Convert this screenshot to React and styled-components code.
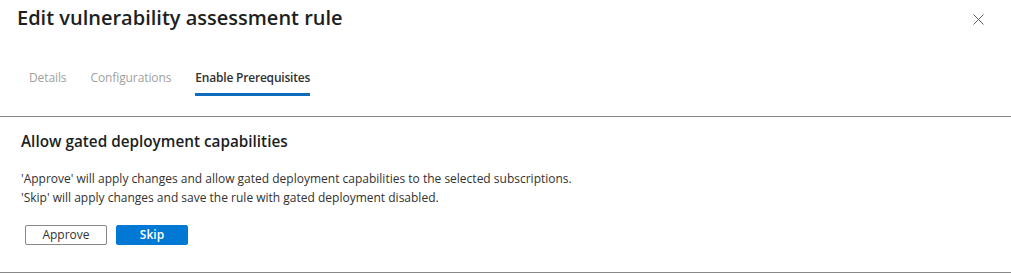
import React from 'react';
import styled, { createGlobalStyle } from 'styled-components';

const GlobalStyle = createGlobalStyle`
  body {
    margin: 0;
    background: #fff;
    font-family: "Open Sans", "Noto Sans", sans-serif;
    color: #323130;
  }
`;

const Panel = styled.div`
  width: 1011px;
  height: 274px;
  overflow: hidden;
  background: #fff;
`;

const Header = styled.div`
  padding: 4px 0 0 17px;
  display: flex;
  flex-direction: column;
`;

const TitleRow = styled.div`
  display: flex;
  align-items: flex-start;
  justify-content: space-between;
`;

const Title = styled.h1`
  margin: 0;
  font-size: 20px;
  line-height: 28px;
  font-weight: 600;
  color: #201f1e;
`;

const CloseButton = styled.button`
  border: 0;
  background: none;
  padding: 0;
  margin: 10px 27px 0 0;
  width: 11px;
  height: 11px;
  display: flex;
  cursor: pointer;
`;

const Tabs = styled.div`
  display: flex;
  margin-top: 36px;
`;

const Tab = styled.div`
  padding: 0 12px;
  font-size: 12px;
  line-height: 20px;
  color: ${({ $active }) => ($active ? '#323130' : '#a19f9d')};
  font-weight: ${({ $active }) => ($active ? 600 : 400)};
  letter-spacing: ${({ $active }) => ($active ? '-0.2px' : '-0.1px')};
`;

const TabLabel = styled.span`
  display: block;
  padding-bottom: 5px;
  border-bottom: 3px solid ${({ $active }) => ($active ? '#0f6cbd' : 'transparent')};
`;

const Divider = styled.hr`
  margin: ${({ $top }) => $top}px 0 0;
  border: 0;
  border-top: 1px solid #8a8886;
`;

const Section = styled.section`
  padding: 14px 21px 0;
  height: 155px;
  box-sizing: border-box;
`;

const Heading = styled.h2`
  margin: 0;
  font-size: 15.3px;
  line-height: 20px;
  font-weight: 600;
  color: #201f1e;
`;

const Text = styled.p`
  margin: 18px 0 0;
  font-size: 12px;
  line-height: 19px;
`;

const Actions = styled.div`
  display: flex;
  gap: 9px;
  margin: 18px 0 0 4px;
`;

const Button = styled.button`
  height: 20px;
  box-sizing: border-box;
  padding: 0;
  width: ${({ $w }) => $w}px;
  font-family: inherit;
  font-size: 12px;
  line-height: 18px;
  border-radius: 2px;
  border: 1px solid ${({ $primary }) => ($primary ? '#0078d4' : '#8a8886')};
  background: ${({ $primary }) => ($primary ? '#0078d4' : '#fff')};
  color: ${({ $primary }) => ($primary ? '#fff' : '#323130')};
  font-weight: ${({ $primary }) => ($primary ? 600 : 400)};
  cursor: pointer;
`;

const tabs = ['Details', 'Configurations', 'Enable Prerequisites'];

export default function App() {
  return (
    <Panel>
      <GlobalStyle />
      <Header>
        <TitleRow>
          <Title>Edit vulnerability assessment rule</Title>
          <CloseButton aria-label="Close">
            <svg width="11" height="11" viewBox="0 0 11 11">
              <path d="M0.5 0.5 L10.5 10.5 M10.5 0.5 L0.5 10.5" stroke="#605e5c" strokeWidth="1" />
            </svg>
          </CloseButton>
        </TitleRow>
        <Tabs>
          {tabs.map((t, i) => (
            <Tab key={t} $active={i === 2}>
              <TabLabel $active={i === 2}>{t}</TabLabel>
            </Tab>
          ))}
        </Tabs>
      </Header>
      <Divider $top={20} />
      <Section>
        <Heading>Allow gated deployment capabilities</Heading>
        <Text>
          'Approve' will apply changes and allow gated deployment capabilities to the selected subscriptions.
          <br />
          'Skip' will apply changes and save the rule with gated deployment disabled.
        </Text>
        <Actions>
          <Button $w={82}>Approve</Button>
          <Button $w={72} $primary>Skip</Button>
        </Actions>
      </Section>
      <Divider $top={0} />
    </Panel>
  );
}
